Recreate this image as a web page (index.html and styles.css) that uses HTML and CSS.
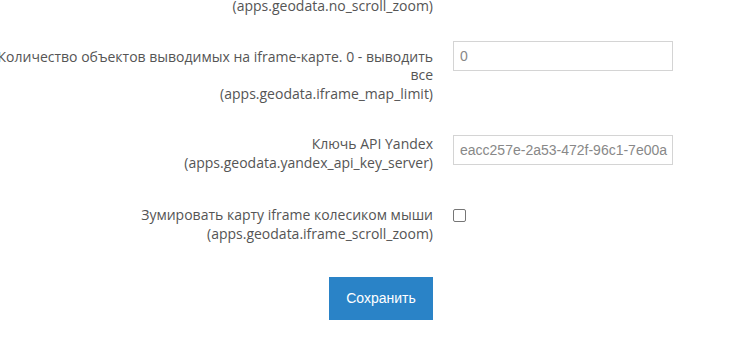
FILE: index.html
```html
<!DOCTYPE html>
<html lang="ru">
<head>
  <meta charset="UTF-8" />
  <title>Настройки geodata</title>
  <link rel="stylesheet" href="styles.css">
</head>
<body>
  <form class="form-horizontal">
    <div class="form-group group-top">
      <label class="control-label">(apps.geodata.no_scroll_zoom)</label>
    </div>

    <div class="form-group group-limit">
      <label class="control-label label-pad" for="map_limit">Количество объектов выводимых на iframe-карте. 0 - выводить все<br>(apps.geodata.iframe_map_limit)</label>
      <div class="control">
        <input class="form-control" type="text" id="map_limit" value="0" />
      </div>
    </div>

    <div class="form-group group-key">
      <label class="control-label" for="api_key">Ключь API Yandex<br>(apps.geodata.yandex_api_key_server)</label>
      <div class="control">
        <input class="form-control" type="text" id="api_key" value="eacc257e-2a53-472f-96c1-7e00a" />
      </div>
    </div>

    <div class="form-group group-zoom">
      <label class="control-label" for="scroll_zoom">Зумировать карту iframe колесиком мыши<br>(apps.geodata.iframe_scroll_zoom)</label>
      <div class="control">
        <span class="checkbox" id="scroll_zoom"></span>
      </div>
    </div>

    <div class="form-actions">
      <button type="submit" class="btn-save">Сохранить</button>
    </div>
  </form>
</body>
</html>
```

FILE: styles.css
```css
html, body {
  margin: 0;
  padding: 0;
  background: #fff;
  overflow: hidden;
}
body {
  font-family: "Open Sans", sans-serif;
  font-size: 14px;
  line-height: 18.57px;
  color: #555;
}
.form-horizontal {
  display: flex;
  flex-direction: column;
}
.form-group {
  display: flex;
  align-items: flex-start;
}
.group-top {
  margin-top: -3px;
  margin-bottom: 25px;
}
.group-limit {
  margin-bottom: 32px;
}
.group-key {
  margin-bottom: 34px;
}
.group-zoom {
  margin-bottom: 33px;
}
.control-label {
  width: 453px;
  margin-left: -20px;
  text-align: right;
  flex-shrink: 0;
}
.label-pad {
  padding-top: 7px;
}
.control {
  margin-left: 20px;
}
.form-control {
  display: block;
  box-sizing: border-box;
  width: 220px;
  height: 30px;
  padding: 4px 0 4px 6px;
  border: 1px solid #d4d4d4;
  border-radius: 0;
  font-family: "Liberation Sans", Arial, sans-serif;
  font-size: 14px;
  color: #888;
  background: #fff;
  outline: none;
}
.checkbox {
  display: block;
  box-sizing: border-box;
  width: 13px;
  height: 13px;
  margin-top: 3px;
  border: 1px solid #767676;
  border-radius: 2px;
  background: #fff;
}
.form-actions {
  display: flex;
  justify-content: flex-end;
  width: 433px;
}
.btn-save {
  width: 104px;
  height: 43px;
  border: none;
  border-radius: 0;
  background-color: #2a83c7;
  color: #fff;
  font-family: "Liberation Sans", Arial, sans-serif;
  font-size: 14px;
  cursor: pointer;
}
```
